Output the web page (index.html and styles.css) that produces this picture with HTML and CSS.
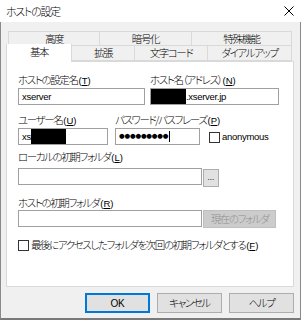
FILE: index.html
```html
<!DOCTYPE html>
<html lang="ja">
<head>
<meta charset="utf-8">
<link rel="stylesheet" href="styles.css">
</head>
<body>
<div class="window">
  <div class="titlebar">
    <span class="title">ホストの設定</span>
    <svg class="close" width="10" height="10" viewBox="0 0 10 10"><path d="M0.5 0.5 L9.5 9.5 M9.5 0.5 L0.5 9.5" stroke="#000" stroke-width="1" fill="none"/></svg>
  </div>
  <div class="client">
    <div class="tabs">
      <div class="tabrow back">
        <div class="tab w92">高度</div>
        <div class="tab w92">暗号化</div>
        <div class="tab w100">特殊機能</div>
      </div>
      <div class="tabrow front">
        <div class="tab sel w66">基本</div>
        <div class="tab w63">拡張</div>
        <div class="tab w73">文字コード</div>
        <div class="tab w84">ダイアルアップ</div>
      </div>
    </div>
    <div class="panel">
      <div class="row rowA">
        <div class="field fA1">
          <div class="label">ホストの設定名<span class="mn">(<u>T</u>)</span></div>
          <div class="input"><span class="latin">xserver</span></div>
        </div>
        <div class="field fA2">
          <div class="label">ホスト名（アドレス）<span class="mn">(<u>N</u>)</span></div>
          <div class="input"><span class="mask m35"></span><span class="latin">.xserver.jp</span></div>
        </div>
      </div>
      <div class="row rowB">
        <div class="field fB1">
          <div class="label">ユーザー名<span class="mn">(<u>U</u>)</span></div>
          <div class="input"><span class="latin">xs</span><span class="mask m35"></span></div>
        </div>
        <div class="field fB2">
          <div class="label">パスワード/パスフレーズ<span class="mn">(<u>P</u>)</span></div>
          <div class="input"><span class="dots">●●●●●●●●●</span><span class="caret"></span></div>
        </div>
        <label class="check anon"><span class="box"></span><span class="ctext latin">anonymous</span></label>
      </div>
      <div class="label lC">ローカルの初期フォルダ<span class="mn">(<u>L</u>)</span></div>
      <div class="line">
        <div class="input wide"></div>
        <div class="btn dots3">...</div>
      </div>
      <div class="label lD">ホストの初期フォルダ<span class="mn">(<u>R</u>)</span></div>
      <div class="line">
        <div class="input wide"></div>
        <div class="btn disabled">現在のフォルダ</div>
      </div>
      <label class="check last"><span class="box"></span><span class="ctext">最後にアクセスしたフォルダを次回の初期フォルダとする<span class="mn">(<u>F</u>)</span></span></label>
    </div>
    <div class="buttons">
      <div class="pbtn default"><span class="latin ok">OK</span></div>
      <div class="pbtn">キャンセル</div>
      <div class="pbtn">ヘルプ</div>
    </div>
  </div>
</div>
</body>
</html>
```
FILE: styles.css
```css
* { box-sizing: border-box; }
html, body { margin: 0; padding: 0; }
body {
  width: 301px;
  height: 320px;
  overflow: hidden;
  background: #f0f0f0;
  font-family: "Noto Sans CJK JP", sans-serif;
  font-size: 10.5px;
  font-weight: 300;
  letter-spacing: -1.4px;
  font-feature-settings: "palt";
  color: #000;
}
.latin {
  font-family: "Liberation Sans", sans-serif;
  font-size: 9.5px;
  letter-spacing: -0.3px;
  font-weight: 400;
}
.mn {
  font-family: "Liberation Sans", sans-serif;
  font-size: 9.5px;
  letter-spacing: 0;
  font-weight: 400;
  margin-left: 1px;
}
.window {
  width: 301px;
  height: 320px;
  display: flex;
  flex-direction: column;
}
.titlebar {
  height: 22px;
  background: #fff;
  display: flex;
  align-items: center;
  justify-content: space-between;
  padding: 0 7px 0 6px;
}
.title { line-height: 14px; font-size: 11px; letter-spacing: -1.3px; }
.close { display: block; }
.client {
  flex: 1;
  border-left: 1px solid #8a8a8a;
  border-right: 1px solid #8a8a8a;
  border-bottom: 2px solid #7a7a7a;
  padding: 9px 6px 0 5px;
  display: flex;
  flex-direction: column;
}
.tabs { display: flex; flex-direction: column; }
.tabrow { display: flex; }
.tabrow.back { margin-left: 2px; height: 15px; }
.tabrow.front { height: 15px; position: relative; z-index: 2; }
.tab {
  border: 1px solid #d9d9d9;
  border-left: none;
  background: #f0f0f0;
  text-align: center;
  line-height: 13px;
  height: 15px;
  white-space: nowrap;
}
.tabrow .tab:first-child { border-left: 1px solid #d9d9d9; }
.tabrow.front .tab { border-top: none; }
.tabrow.front .tab:not(.sel) { height: 15px; border-bottom: 1px solid #d9d9d9; }
.tab.sel {
  background: #fff;
  border: 1px solid #d9d9d9;
  border-bottom: none;
  height: 18px;
  margin-top: -2px;
  line-height: 16px;
}
.w92 { width: 92px; }
.w100 { width: 100px; }
.w66 { width: 66px; }
.w63 { width: 63px; }
.w73 { width: 73px; }
.w84 { width: 84px; }
.panel {
  width: 288px;
  height: 226px;
  background: #fff;
  border: 1px solid #d9d9d9;
  padding: 11px 0 0 11px;
  position: relative;
  z-index: 1;
}
.label { line-height: 14px; height: 14px; white-space: nowrap; }
u { text-decoration: underline; text-underline-offset: 1px; }
.row { display: flex; align-items: flex-start; }
.field { display: flex; flex-direction: column; }
.field .label { margin-bottom: 1px; }
.input {
  height: 17px;
  border: 1px solid #a0a0a0;
  background: #fff;
  padding: 0 0 0 3px;
  line-height: 15px;
  white-space: nowrap;
  display: flex;
  align-items: center;
  overflow: hidden;
}
.rowA .fA1 { width: 127px; }
.rowA .fA2 { width: 129px; margin-left: 5px; }
.rowA .fA2 .input { padding-left: 0; }
.rowB { margin-top: 8px; }
.rowB .fB1 { width: 90px; }
.rowB .fB2 { width: 85px; margin-left: 7px; }
.mask { display: inline-block; background: #000; height: 15px; }
.m35 { width: 35px; }
.dots { font-family: "DejaVu Sans", sans-serif; font-size: 6.5px; letter-spacing: -0.2px; line-height: 15px; font-weight: 400; }
.caret { display: inline-block; width: 1px; height: 11px; background: #000; margin-left: 1px; }
.check { display: flex; align-items: center; white-space: nowrap; }
.box { width: 11px; height: 11px; border: 1px solid #333; background: #fff; flex: none; }
.ctext { margin-left: 2px; line-height: 14px; }
.anon { margin-left: 9px; margin-top: 17px; }
.anon .ctext { margin-left: 2px; }
.lC { margin-top: 5px; margin-bottom: 4px; }
.lD { margin-top: 9px; margin-bottom: 0; }
.line { display: flex; align-items: flex-start; }
.input.wide { width: 184px; }
.btn {
  margin-left: 1px;
  height: 18px;
  border: 1px solid #adadad;
  background: #e1e1e1;
  text-align: center;
  line-height: 16px;
  white-space: nowrap;
}
.btn.dots3 { width: 16px; margin-top: 1px; font-size: 9px; line-height: 14px; letter-spacing: 0; }
.btn.disabled {
  width: 73px;
  background: #cccccc;
  border-color: #bfbfbf;
  color: #8e8e8e;
}
.last { margin-top: 10px; }
.last .ctext { margin-left: 2px; }
.buttons {
  display: flex;
  justify-content: flex-end;
  gap: 7px;
  margin-top: 6px;
}
.pbtn {
  width: 65px;
  height: 20px;
  border: 1px solid #adadad;
  background: #e1e1e1;
  text-align: center;
  line-height: 18px;
}
.ok { font-size: 10px; }
.pbtn.default { border-color: #0078d7; box-shadow: inset 0 0 0 1px #0078d7; }
```
